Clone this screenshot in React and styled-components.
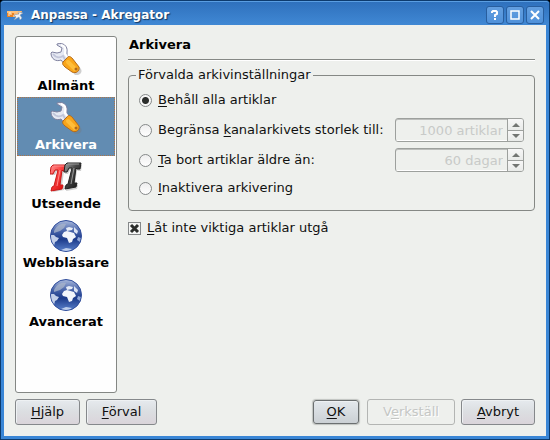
import React, { useState } from 'react';
import styled, { createGlobalStyle, css } from 'styled-components';

const GlobalStyle = createGlobalStyle`
  *, *::before, *::after { box-sizing: border-box; }
  body { margin: 0; background: #000; }
  body, button, input { font: 13px/16px "DejaVu Sans", sans-serif; color: #101010; }
  u { text-decoration-thickness: 1px; text-underline-offset: 2px; text-decoration-skip-ink: none; }
`;

const Window = styled.div`
  display: flex;
  flex-direction: column;
  min-height: 100vh;
  border: 1px solid #0d3b6e;
  border-radius: 4px 4px 0 0;
  background: #3a86d6;
  padding: 0 3px 3px;
`;

const TitleBar = styled.header`
  display: flex;
  align-items: center;
  gap: 2px;
  height: 24px;
  margin: 0 -3px;
  padding: 2px 5px 0 6px;
  border-top: 1px solid #5a9ee2;
  border-radius: 3px 3px 0 0;
  background: linear-gradient(#2f71bd, #4088d4);
`;

const WindowTitle = styled.h1`
  flex: 1;
  margin: 0 0 0 5px;
  font: bold 12px/16px "DejaVu Sans", sans-serif;
  color: #fff;
  text-shadow: 1px 1px 1px #12365f;
`;

const TitleButton = styled.button`
  display: grid;
  place-items: center;
  width: 18px;
  height: 18px;
  padding: 0;
  border: 1px solid #285e9e;
  border-radius: 3px;
  background: linear-gradient(#639fe0, #4f91da);
`;

const Body = styled.main`
  flex: 1;
  display: flex;
  flex-direction: column;
  gap: 6px;
  padding: 11px;
  background: #eef0ed;
`;

const Columns = styled.div`
  flex: 1;
  display: flex;
  gap: 11px;
`;

const PageList = styled.nav`
  width: 102px;
  flex: none;
  padding: 1px;
  border: 1px solid #848784;
  border-radius: 3px;
  background: #fefefe;
`;

const PageItem = styled.button`
  display: flex;
  flex-direction: column;
  align-items: center;
  gap: 3px;
  width: 100%;
  height: 59px;
  padding: 4px 0 2px;
  border: 1px dotted transparent;
  background: transparent;
  font-weight: bold;
  color: #000;
  ${(p) => p.$active && css`
    border-color: #ad7548;
    background: #628cb2;
    color: #fff;
  `}
`;

const Page = styled.section`
  flex: 1;
  min-width: 0;
`;

const Heading = styled.h2`
  margin: 0 0 7px;
  padding: 1px 1px 6px;
  border-bottom: 1px solid #858885;
  box-shadow: 0 1px #fff;
  font: bold 13px/16px "DejaVu Sans", sans-serif;
  color: #000;
`;

const Group = styled.fieldset`
  display: flex;
  flex-direction: column;
  gap: 6px;
  margin: 0;
  padding: 5px 10px 12px;
  border: 1px solid #858885;
  border-radius: 4px;
`;

const GroupTitle = styled.legend`
  padding: 0 2px;
  margin-left: -3px;
`;

const Row = styled.div`
  display: flex;
  align-items: center;
  justify-content: space-between;
  height: ${(p) => (p.$compact ? 20 : 24)}px;
`;

const OptionLabel = styled.label`
  display: flex;
  align-items: center;
  gap: 6px;
  white-space: nowrap;
`;

const Radio = styled.input`
  appearance: none;
  width: 13px;
  height: 13px;
  margin: 0;
  border: 1px solid #858889;
  border-radius: 50%;
  background: linear-gradient(#eee, #fff);
  &:checked { background: radial-gradient(circle, #2b2d2b 3px, #f6f6f6 4px); }
`;

const CheckWrap = styled.span`
  display: grid;
  & > * { grid-area: 1 / 1; }
  & > svg { pointer-events: none; visibility: hidden; }
  & > input:checked + svg { visibility: visible; }
`;

const CheckLine = styled.div`
  margin-top: 9px;
`;

const Checkbox = styled.input`
  appearance: none;
  width: 13px;
  height: 13px;
  margin: 0;
  border: 1px solid #858889;
  background: #f4f5f4;
`;

const Spin = styled.span`
  display: flex;
  width: 129px;
  height: 24px;
  border: 1px solid #9da09d;
  border-radius: 3px;
  box-shadow: inset 0 1px #bcbebc;
  overflow: hidden;
`;

const SpinInput = styled.input`
  flex: 1;
  min-width: 0;
  padding: 2px 4px 0;
  border: 0;
  border-bottom: 1px solid #fff;
  background: transparent;
  text-align: right;
  &:disabled { color: #c8cac8; }
`;

const SpinButtons = styled.span`
  display: grid;
  grid-template-rows: 1fr 1fr;
  width: 16px;
  border-left: 1px solid #9da09d;
`;

const SpinButton = styled.button`
  display: grid;
  place-items: center;
  padding: 0;
  border: 0;
  background: linear-gradient(#f7f7f7, #e9ebe9);
  & + & { border-top: 1px solid #9da09d; }
`;

const Actions = styled.footer`
  display: flex;
  gap: 6px;
`;

const Spacer = styled.span`
  flex: 1;
`;

const PushButton = styled.button`
  width: ${(p) => p.$width}px;
  height: 26px;
  padding: 0;
  border: 1px solid #85888b;
  border-radius: 3px;
  background: linear-gradient(#e6eaee, #dcdfe2 45%, #dad4da);
  box-shadow: inset 1px 1px #eef1f3;
  ${(p) => p.$primary && css`
    border-color: #6b6f70;
    box-shadow: inset 0 1px #eef1f3, 0 0 1px 1px #bfc2bf;
    background: linear-gradient(#e3e8ec, #cbd0d4);
    height: 24px;
    margin: 1px 2px 1px 0;
  `}
  &:disabled {
    border-color: #b3b5b3;
    background: #eef0ed;
    box-shadow: none;
    color: #c5c7c5;
    text-shadow: 1px 1px #fff;
  }
`;

const FeedIcon = () => (
  <svg width="17" height="14" viewBox="0 0 17 14" aria-hidden="true">
    <path d="M0 3h15l-3 6H0z" fill="#e98223" />
    <path d="M0 3h15l-1 2H0z" fill="#ffc078" />
    <path d="M2 8V5h2v2M6 8h2V5M10 5v3" stroke="#fff0d5" fill="none" />
    <path d="M7 7l5-1-1-2 5 1-3 2 2 3-2 2-1-3-5 3 2-3z" fill="#eef1f5" stroke="#8699aa" strokeWidth=".5" />
  </svg>
);

const WrenchIcon = () => (
  <svg width="32" height="32" viewBox="0 0 32 32" aria-hidden="true">
    <path d="M14 19l5-4 4 1 8 10c2 4-2 7-6 6L16 22z" fill="#777" opacity=".35" />
    <path d="M7 1c6-2 11 2 10 8v3l5 5-6 6-5-6c-5 2-10-1-10-7l1-1 5 1 4-1 1-4-5-3z" fill="#e6e9f3" stroke="#7f819f" strokeLinejoin="round" />
    <path d="M11 2c4 1 5 3 4 9l5 6" fill="none" stroke="#fff" strokeWidth="2" />
    <path d="M3 11c3 4 7 4 10 2l3 5" fill="none" stroke="#c1c5d9" strokeWidth="2" />
    <path d="M13 19c-1 2 0 3 2 5l7 5c4 2 8-1 7-5l-7-9c-2-2-4-2-5 0z" fill="#f9a51a" stroke="#b56b19" strokeLinejoin="round" />
    <path d="M18 19l7 7" stroke="#ffbe3a" strokeWidth="4" strokeLinecap="round" />
    <circle cx="26" cy="26" r="1.5" fill="#b0691c" />
  </svg>
);

const LetterShape = 'M1 6L3 4H17L16 10H13L12 9 10 24 13 24 12 28 1 30 2 26 4 25 8 9 5 9 3 13H0z';

const FontsIcon = () => (
  <svg width="32" height="32" viewBox="0 0 32 32" aria-hidden="true">
    <defs>
      <linearGradient id="red" x2="1" y2="1">
        <stop stopColor="#ff9a9a" /><stop offset=".4" stopColor="#fa4040" /><stop offset="1" stopColor="#d00000" />
      </linearGradient>
      <linearGradient id="black" x2="1" y2="1">
        <stop stopColor="#a8a8a8" /><stop offset=".4" stopColor="#484848" /><stop offset="1" stopColor="#101010" />
      </linearGradient>
    </defs>
    <g strokeLinejoin="round">
      <path d={LetterShape} transform="translate(2 1)" fill="#777" opacity=".35" />
      <path d={LetterShape} fill="url(#red)" stroke="#c81818" />
      <path d={LetterShape} transform="translate(15 0)" fill="#777" opacity=".35" />
      <path d={LetterShape} transform="translate(14 -2)" fill="url(#black)" stroke="#222" />
      <path d="M4 5h10M10 9L7 25" stroke="#ff8a8a" fill="none" />
      <path d="M18 3h11M24 7l-3 16" stroke="#999" fill="none" />
    </g>
  </svg>
);

const GlobeIcon = () => (
  <svg width="32" height="32" viewBox="0 0 32 32" aria-hidden="true">
    <defs>
      <linearGradient id="sea" x2="0" y2="1">
        <stop stopColor="#a9b9dc" /><stop offset=".35" stopColor="#4561a8" /><stop offset=".6" stopColor="#1b3a8a" /><stop offset="1" stopColor="#5b82cc" />
      </linearGradient>
      <clipPath id="disc"><circle cx="16" cy="16" r="15" /></clipPath>
    </defs>
    <circle cx="16" cy="16" r="15.5" fill="url(#sea)" stroke="#304d9b" />
    <g clipPath="url(#disc)">
      <path d="M4 11c3-6 7-8 12-7l-2 4-4 3-6 2z" fill="#a9b5cb" opacity=".75" />
      <path d="M0 15l4 0 2 2 3 1-2 3-2 1-1 4-5-4z" fill="#c3cfe9" />
      <path d="M16 8l3-1 4 1-1 2-5 1z" fill="#e6ecf7" />
      <path d="M14 12l3-1 7 2 2 4-3 2-1 3-3 1-2-5-4-1-1-2z" fill="#f2f5fb" />
      <path d="M24 7l4 4-1 3-3-2z" fill="#dbe3f3" />
      <path d="M28 17l3 1-1 4-3-2z" fill="#91a8d8" />
      <path d="M11 30l5-2 6 1-4 3h-6z" fill="#bdceec" />
    </g>
  </svg>
);

const Arrow = ({ down }) => (
  <svg width="8" height="4" viewBox="0 0 8 4" aria-hidden="true">
    <path d={down ? 'M0 0h8L4 4z' : 'M0 4h8L4 0z'} fill="#737673" />
  </svg>
);

const pages = [
  ['Allmänt', WrenchIcon],
  ['Arkivera', WrenchIcon],
  ['Utseende', FontsIcon],
  ['Webbläsare', GlobeIcon],
  ['Avancerat', GlobeIcon],
];

function SpinBox({ label, value }) {
  return (
    <Spin>
      <SpinInput aria-label={label} defaultValue={value} disabled />
      <SpinButtons>
        <SpinButton type="button" aria-label="Öka" disabled><Arrow /></SpinButton>
        <SpinButton type="button" aria-label="Minska" disabled><Arrow down /></SpinButton>
      </SpinButtons>
    </Spin>
  );
}

function Option({ id, selected, onSelect, compact, children, spin }) {
  return (
    <Row $compact={compact}>
      <OptionLabel>
        <Radio type="radio" name="archive" checked={selected === id} onChange={() => onSelect(id)} />
        <span>{children}</span>
      </OptionLabel>
      {spin}
    </Row>
  );
}

export default function App() {
  const [active, setActive] = useState('Arkivera');
  const [mode, setMode] = useState('all');
  const choice = { selected: mode, onSelect: setMode };
  return (
    <>
      <GlobalStyle />
      <Window>
        <TitleBar>
          <FeedIcon />
          <WindowTitle>Anpassa - Akregator</WindowTitle>
          <TitleButton type="button" aria-label="Hjälp">
            <svg width="10" height="12" viewBox="0 0 10 12">
              <path d="M2 4V3l1-1h3l1 1v2L5 6v2M5 9v2" fill="none" stroke="#fff" strokeWidth="2" />
            </svg>
          </TitleButton>
          <TitleButton type="button" aria-label="Maximera">
            <svg width="10" height="10" viewBox="0 0 10 10">
              <path d="M1 1h8v8H1z" fill="none" stroke="#fff" strokeWidth="1.5" />
            </svg>
          </TitleButton>
          <TitleButton type="button" aria-label="Stäng">
            <svg width="10" height="10" viewBox="0 0 10 10">
              <path d="M1 1l8 8M9 1L1 9" stroke="#fff" strokeWidth="2" />
            </svg>
          </TitleButton>
        </TitleBar>
        <Body>
          <Columns>
            <PageList>
              {pages.map(([name, Icon]) => (
                <PageItem key={name} type="button" $active={name === active} onClick={() => setActive(name)}>
                  <Icon />
                  {name}
                </PageItem>
              ))}
            </PageList>
            <Page>
              <Heading>Arkivera</Heading>
              <Group>
                <GroupTitle>Förvalda arkivinställningar</GroupTitle>
                <Option id="all" {...choice}><u>B</u>ehåll alla artiklar</Option>
                <Option id="size" {...choice} spin={<SpinBox label="Arkivstorlek" value="1000 artiklar" />}>
                  Begränsa <u>k</u>analarkivets storlek till:
                </Option>
                <Option id="age" {...choice} spin={<SpinBox label="Artikelålder" value="60 dagar" />}>
                  <u>T</u>a bort artiklar äldre än:
                </Option>
                <Option id="off" compact {...choice}><u>I</u>naktivera arkivering</Option>
              </Group>
              <CheckLine>
                <OptionLabel>
                  <CheckWrap>
                    <Checkbox type="checkbox" defaultChecked />
                    <svg width="13" height="13" viewBox="0 0 13 13" aria-hidden="true">
                      <path d="M3 3l7 7M10 3l-7 7" stroke="#2b2d2b" strokeWidth="3" />
                    </svg>
                  </CheckWrap>
                  <span><u>L</u>åt inte viktiga artiklar utgå</span>
                </OptionLabel>
              </CheckLine>
            </Page>
          </Columns>
          <Actions>
            <PushButton type="button" $width={65}><u>H</u>jälp</PushButton>
            <PushButton type="button" $width={71}><u>F</u>örval</PushButton>
            <Spacer />
            <PushButton type="button" $width={46} $primary><u>O</u>K</PushButton>
            <PushButton type="button" $width={88} disabled>V<u>e</u>rkställ</PushButton>
            <PushButton type="button" $width={74}><u>A</u>vbryt</PushButton>
          </Actions>
        </Body>
      </Window>
    </>
  );
}
